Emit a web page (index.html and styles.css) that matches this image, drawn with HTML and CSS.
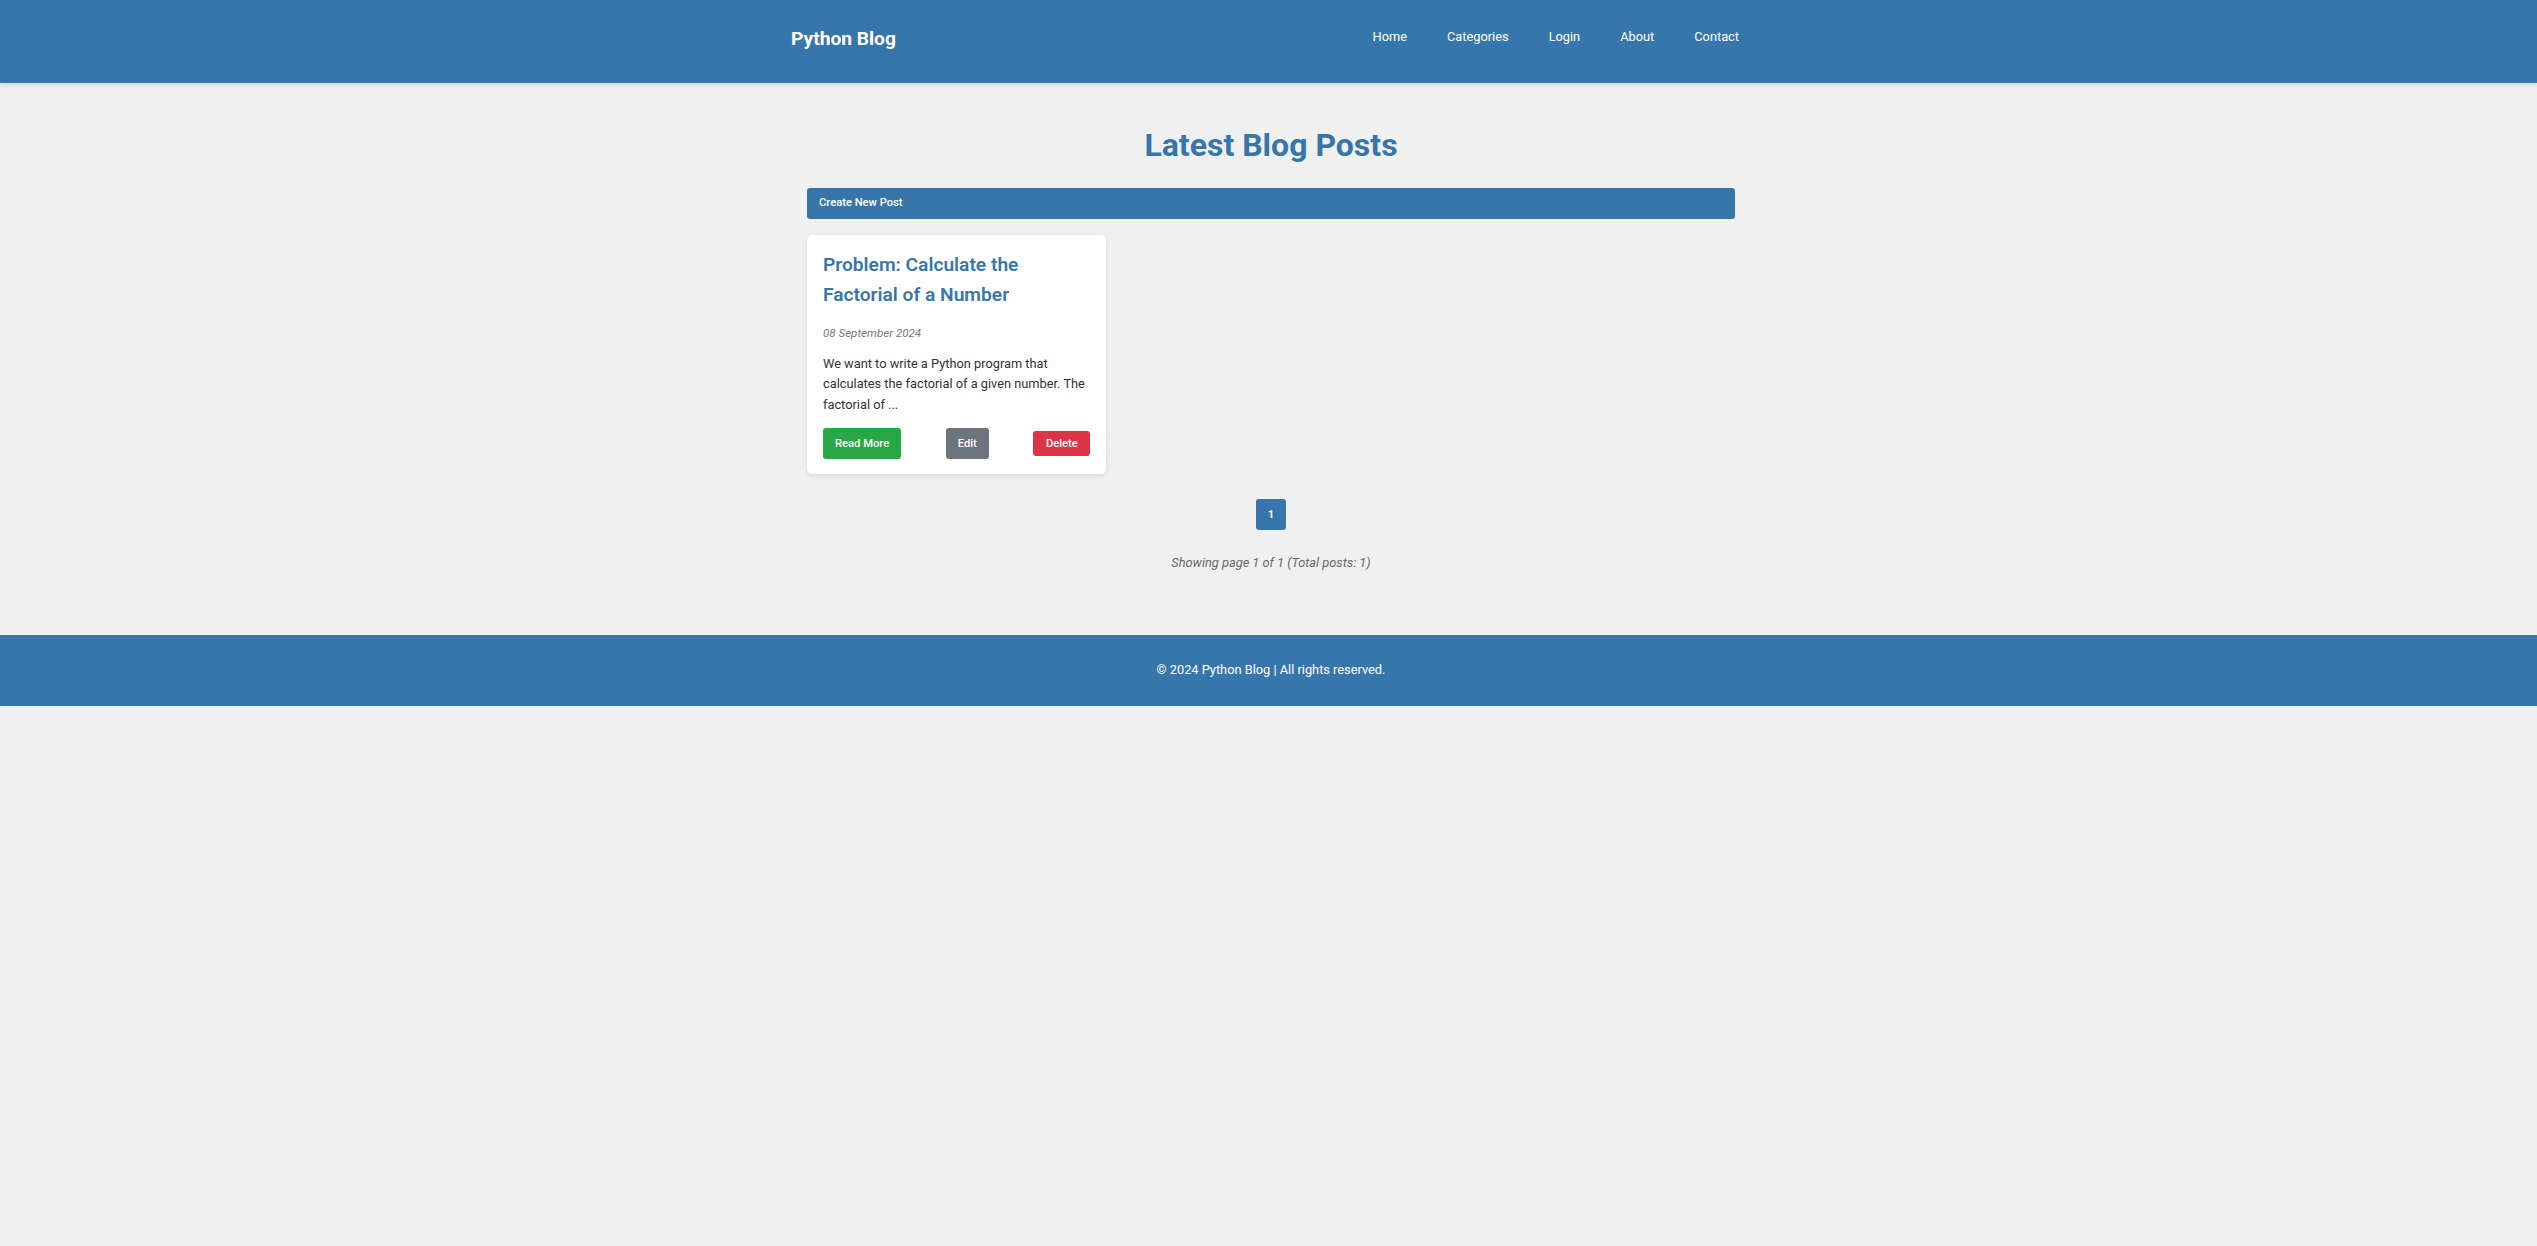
FILE: index.html
```html
<!DOCTYPE html>
<html lang="en">
<head>
<meta charset="utf-8">
<title>Python Blog</title>
<link rel="stylesheet" href="styles.css">
</head>
<body>
<header class="site-header">
  <div class="header-inner">
    <a class="logo" href="#">Python Blog</a>
    <nav>
      <ul class="nav">
        <li><a href="#">Home</a></li>
        <li><a href="#">Categories</a></li>
        <li><a href="#">Login</a></li>
        <li><a href="#">About</a></li>
        <li><a href="#">Contact</a></li>
      </ul>
    </nav>
  </div>
</header>
<main class="main">
  <h1 class="page-title">Latest Blog Posts</h1>
  <a class="btn-create" href="#">Create New Post</a>
  <div class="posts-grid">
    <article class="post-card">
      <h2 class="post-title">Problem: Calculate the Factorial of a Number</h2>
      <p class="post-date">08 September 2024</p>
      <p class="post-excerpt">We want to write a Python program that calculates the factorial of a given number. The factorial of ...</p>
      <div class="post-actions">
        <a class="btn btn-green" href="#">Read More</a>
        <a class="btn btn-gray" href="#">Edit</a>
        <button class="btn btn-red" type="button">Delete</button>
      </div>
    </article>
  </div>
  <div class="pagination">
    <a class="page-link active" href="#">1</a>
  </div>
  <p class="page-info">Showing page 1 of 1 (Total posts: 1)</p>
</main>
<footer class="site-footer">
  <p>© 2024 Python Blog | All rights reserved.</p>
</footer>
</body>
</html>
```

FILE: styles.css
```css
* { box-sizing: border-box; }
html, body {
  margin: 0;
  padding: 0;
  background: #f0f0f0;
  font-family: Roboto, "Liberation Sans", Arial, sans-serif;
  color: #333;
}
a { text-decoration: none; }

.site-header {
  background: #3776ab;
  height: 83px;
  box-shadow: 0 2px 4px rgba(0, 0, 0, 0.1);
}
.header-inner {
  width: 958px;
  margin-left: calc(50% - 477.5px);
  padding-top: 28px;
  display: flex;
  justify-content: space-between;
  align-items: flex-start;
}
.logo {
  color: #fff;
  font-size: 19.2px;
  font-weight: 700;
  line-height: 22.5px;
}
.nav {
  list-style: none;
  margin: 1px 0 0;
  padding: 0;
  display: flex;
  gap: 20px;
}
.nav a {
  display: block;
  color: #fff;
  font-size: 12.8px;
  line-height: 15px;
  padding: 0 10px;
}

.main {
  width: 928px;
  margin-left: calc(50% - 461.5px);
  padding: 44px 0 61px;
}
.page-title {
  margin: 0 0 24px;
  text-align: center;
  color: #3776ab;
  font-size: 32px;
  font-weight: 700;
  line-height: 37px;
}
.btn-create {
  display: block;
  background: #3776ab;
  color: #fff;
  font-size: 11.2px;
  font-weight: 500;
  line-height: 15px;
  padding: 7px 12px 9px;
  border-radius: 3px;
}
.posts-grid {
  margin-top: 16px;
  display: grid;
  grid-template-columns: repeat(3, 1fr);
  gap: 15px;
}
.post-card {
  background: #fff;
  border-radius: 5px;
  box-shadow: 0 2px 5px rgba(0, 0, 0, 0.1);
  padding: 15px 16px;
}
.post-title {
  margin: 0 0 14px;
  color: #3776ab;
  font-size: 19.2px;
  font-weight: 600;
  line-height: 30px;
}
.post-date {
  margin: 0 0 12px;
  color: #777;
  font-size: 11.6px;
  font-style: italic;
  line-height: 18px;
}
.post-excerpt {
  margin: 0 0 13px;
  font-size: 12.8px;
  line-height: 20.48px;
  color: #333;
}
.post-actions {
  display: flex;
  justify-content: space-between;
  align-items: center;
}
.btn {
  display: inline-block;
  color: #fff;
  font-family: inherit;
  font-size: 11.2px;
  font-weight: 500;
  line-height: 15px;
  padding: 8px 12px;
  border-radius: 3px;
  border: 0;
}
.btn-green { background: #28a745; }
.btn-gray { background: #6c757d; }
.btn-red {
  background: #dc3545;
  line-height: 13px;
  padding: 6px 12.5px;
}

.pagination {
  margin-top: 25px;
  display: flex;
  justify-content: center;
}
.page-link {
  display: block;
  width: 30px;
  height: 31px;
  line-height: 31px;
  text-align: center;
  background: #3776ab;
  color: #fff;
  font-size: 11.2px;
  font-weight: 700;
  border-radius: 3px;
}
.page-info {
  margin: 23px 0 0;
  text-align: center;
  color: #666;
  font-size: 12.8px;
  font-style: italic;
  line-height: 20.48px;
}

.site-footer {
  background: #3776ab;
  color: #fff;
  text-align: center;
  padding: 27px 0 29px 5px;
}
.site-footer p {
  margin: 0;
  font-size: 12.8px;
  line-height: 15px;
}
```
